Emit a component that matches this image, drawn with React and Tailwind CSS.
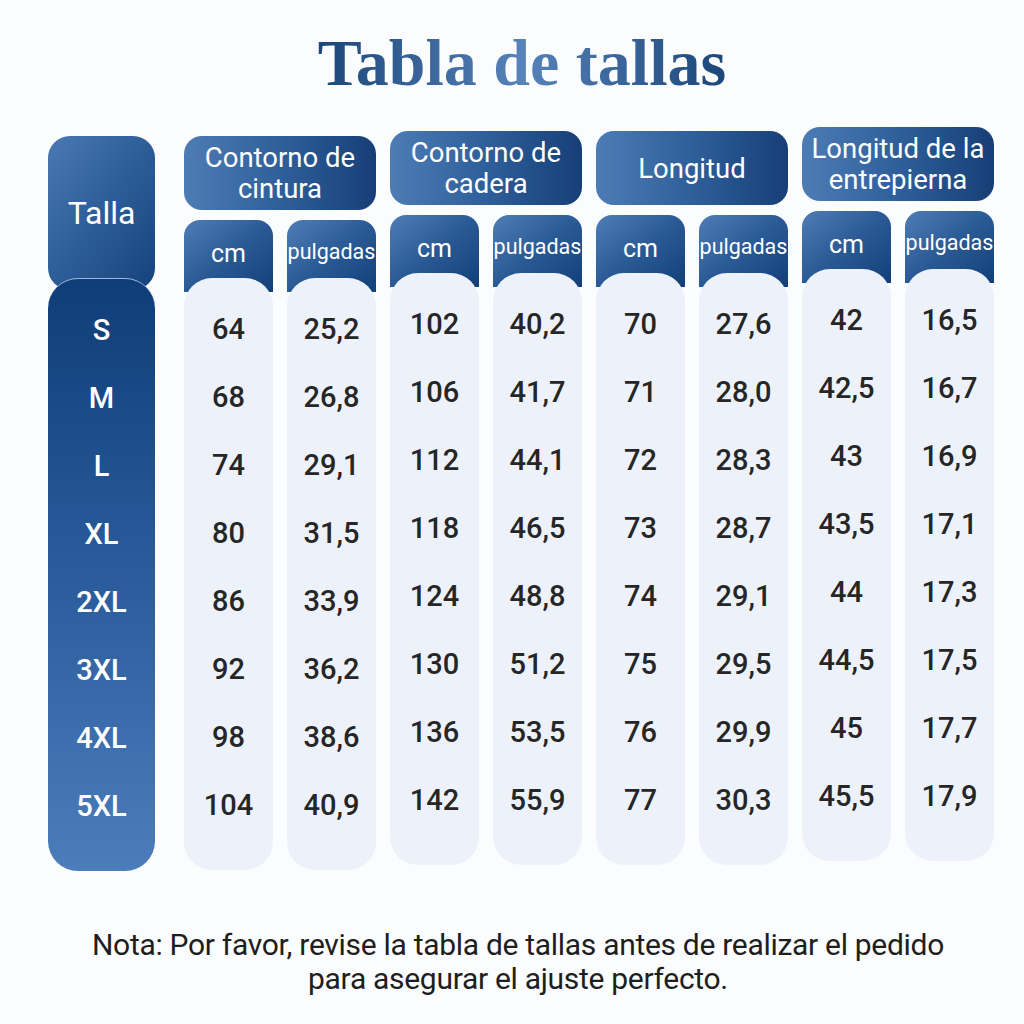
import React from "react";

const sizes = ["S", "M", "L", "XL", "2XL", "3XL", "4XL", "5XL"];

const groups = [
  {
    title: ["Contorno de", "cintura"],
    offset: "mt-0",
    cm: ["64", "68", "74", "80", "86", "92", "98", "104"],
    inch: ["25,2", "26,8", "29,1", "31,5", "33,9", "36,2", "38,6", "40,9"],
  },
  {
    title: ["Contorno de", "cadera"],
    offset: "-mt-[5px]",
    cm: ["102", "106", "112", "118", "124", "130", "136", "142"],
    inch: ["40,2", "41,7", "44,1", "46,5", "48,8", "51,2", "53,5", "55,9"],
  },
  {
    title: ["Longitud"],
    offset: "-mt-[5px]",
    cm: ["70", "71", "72", "73", "74", "75", "76", "77"],
    inch: ["27,6", "28,0", "28,3", "28,7", "29,1", "29,5", "29,9", "30,3"],
  },
  {
    title: ["Longitud de la", "entrepierna"],
    offset: "-mt-[9px]",
    cm: ["42", "42,5", "43", "43,5", "44", "44,5", "45", "45,5"],
    inch: ["16,5", "16,7", "16,9", "17,1", "17,3", "17,5", "17,7", "17,9"],
  },
];

const ValueColumn = ({ label, values, small }) => (
  <div className="flex w-[89px] flex-col">
    <div className="flex h-[72px] items-start justify-center rounded-t-[16px] bg-gradient-to-br from-[#4f7db6] via-[#2a5a95] to-[#123f78] pt-[18px]">
      <span className={small ? "text-[21.5px] leading-[28px] text-white" : "text-[25px] leading-[32px] text-white"}>
        {label}
      </span>
    </div>
    <div className="relative -mt-[14px] rounded-[28px] bg-[#edf2fa] pt-[18px] pb-[30px]">
      {values.map((v) => (
        <div key={v} className="flex h-[68px] items-center justify-center text-[29px] font-medium text-[#262626]">
          {v}
        </div>
      ))}
    </div>
  </div>
);

const App = () => {
  return (
    <div className="min-h-screen w-[1024px] bg-[#fbfcfd] font-['Roboto',sans-serif]">
      <h1 className="pt-[24px] pl-[20px] text-center font-['Liberation_Serif',serif] text-[66px] font-bold leading-[78px]">
        <span className="bg-gradient-to-r from-[#1b4679] via-[#5683ba] to-[#1b4679] bg-clip-text text-transparent">
          Tabla de tallas
        </span>
      </h1>

      <div className="mt-[34px] flex pl-[48px]">
        <div className="flex w-[107px] flex-col">
          <div className="flex h-[154px] items-center justify-center rounded-[22px] bg-gradient-to-br from-[#4a79b3] via-[#2d5d98] to-[#14427c]">
            <span className="text-[32px] text-white">Talla</span>
          </div>
          <div className="relative -mt-[12px] rounded-[30px] border-t border-[#9fb8d8] bg-gradient-to-b from-[#0e3d78] via-[#2a5c9c] to-[#4c7dbb] pt-[18px] pb-[30px]">
            {sizes.map((s) => (
              <div key={s} className="flex h-[68px] items-center justify-center text-[29px] font-medium text-white">
                {s}
              </div>
            ))}
          </div>
        </div>

        <div className="ml-[29px] flex gap-[14px]">
          {groups.map((g) => (
            <div key={g.title.join(" ")} className={"flex w-[192px] flex-col " + g.offset}>
              <div className="flex h-[74px] flex-col items-center justify-center rounded-[18px] bg-gradient-to-r from-[#4d7cb5] via-[#2f5f9a] to-[#173f77] text-[27.5px] leading-[31px] text-white">
                {g.title.map((t) => (
                  <span key={t} className="whitespace-nowrap">{t}</span>
                ))}
              </div>
              <div className="mt-[10px] flex gap-[14px]">
                <ValueColumn label="cm" values={g.cm} />
                <ValueColumn label="pulgadas" values={g.inch} small />
              </div>
            </div>
          ))}
        </div>
      </div>

      <p className="mt-[57px] pl-[12px] text-center text-[30px] leading-[34px] tracking-[-0.3px] text-[#1e1e1e]">
        Nota: Por favor, revise la tabla de tallas antes de realizar el pedido
        <br />
        para asegurar el ajuste perfecto.
      </p>
    </div>
  );
};

export default App;
